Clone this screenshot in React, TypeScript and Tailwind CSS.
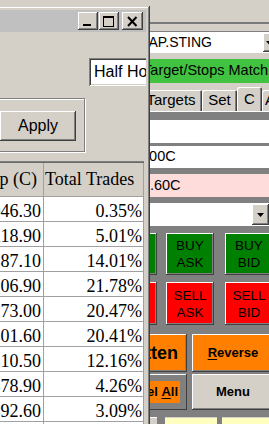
import React from 'react';

// classic 3D bevels
const raised =
  'shadow-[inset_-1px_-1px_0_#404040,inset_1px_1px_0_#ffffff,inset_-2px_-2px_0_#808080]';
const sunken =
  'shadow-[inset_1px_1px_0_#808080,inset_-1px_-1px_0_#ffffff,inset_2px_2px_0_#404040,inset_-2px_-2px_0_#d4d0c8]';
const frame =
  'shadow-[inset_-1px_-1px_0_#404040,inset_1px_1px_0_#d4d0c8,inset_-2px_-2px_0_#808080,inset_2px_2px_0_#ffffff]';

const stats = [
  ['1046.30', '0.35%'],
  ['1118.90', '5.01%'],
  ['1187.10', '14.01%'],
  ['1206.90', '21.78%'],
  ['1273.00', '20.47%'],
  ['1301.60', '20.41%'],
  ['1310.50', '12.16%'],
  ['1378.90', '4.26%'],
  ['1392.60', '3.09%'],
  ['1401.20', '0.44%'],
];

const DownArrow = () => (
  <svg width="7" height="4" viewBox="0 0 7 4">
    <path d="M0 0h7L3.5 4z" fill="#000" />
  </svg>
);

const Tab = ({ label, width, selected = false, left = false }: { label: string; width: string; selected?: boolean; left?: boolean }) => (
  <div
    className={`${width} ${selected ? 'h-[24px]' : 'h-[21px]'} ${left ? 'justify-start pl-[3px]' : 'justify-center'} shrink-0 flex items-center bg-[#d4d0c8] rounded-t-[2px] shadow-[inset_1px_1px_0_#ffffff,inset_-1px_0_0_#404040,inset_-2px_0_0_#808080]`}
  >
    {label}
  </div>
);

const TradePanel = () => (
  <div className="absolute left-[100px] top-0 w-[180px] h-[440px] flex flex-col bg-[#d4d0c8] text-[14px]">
    <div className="mt-[22px] h-[2px] bg-[#7a7a7a] shrink-0" />

    {/* symbol combo */}
    <div className="mt-[7px] h-[22px] shrink-0 flex bg-white border-t border-[#808080]">
      <div className="flex-1 flex items-center justify-end pr-[51px]">AP.STING</div>
      <div className={`w-[17px] my-[1px] bg-[#d4d0c8] flex items-center pl-[3px] ${raised}`}>
        <DownArrow />
      </div>
    </div>

    <div className="mt-[6px] h-[24px] shrink-0 bg-[#41c241] flex items-center justify-end pr-[12px] text-[14.5px]">
      Target/Stops Match
    </div>

    {/* tabs */}
    <div className="mt-[4px] h-[24px] shrink-0 flex items-end pl-[40px] text-[15px]">
      <Tab label="Targets" width="w-[62px]" />
      <Tab label="Set" width="w-[35px]" />
      <Tab label="C" width="w-[25px]" selected />
      <Tab label="Auto" width="w-[40px]" left />
    </div>
    <div className="h-px bg-white shrink-0" />

    <div className="flex-1 flex flex-col bg-[#808080]">
      <div className="mt-[8px] h-[23px] bg-white shrink-0" />
      <div className="mt-[3px] h-[22px] bg-white shrink-0 flex items-center pl-[37px] text-[14.5px]">1.00C</div>
      <div className="mt-[6px] h-[23px] bg-[#ffdcdc] shrink-0 flex items-center pl-[37px] text-[14.5px]">-0.60C</div>
      <div className="mt-[6px] h-[23px] bg-white shrink-0 flex mr-[11px]">
        <div className="flex-1" />
        <div className={`w-[17px] my-[1px] bg-[#d4d0c8] flex items-center justify-center ${raised}`}>
          <DownArrow />
        </div>
      </div>

      {/* order buttons */}
      <div className="mt-[7px] h-[42px] shrink-0 flex pl-[9px] text-[13.5px] leading-[17px] text-center">
        <div className={`w-[48px] bg-[#008000] ${raised}`} />
        <div className={`ml-[9px] w-[48px] bg-[#008000] flex items-center justify-center ${raised}`}>BUY<br />ASK</div>
        <div className={`ml-[11px] w-[48px] bg-[#008000] flex items-center justify-center ${raised}`}>BUY<br />BID</div>
      </div>
      <div className="mt-[7px] h-[43px] shrink-0 flex pl-[9px] text-[13.5px] leading-[17px] text-center">
        <div className={`w-[48px] bg-[#ff0000] ${raised}`} />
        <div className={`ml-[9px] w-[48px] bg-[#ff0000] flex items-center justify-center ${raised}`}>SELL<br />ASK</div>
        <div className={`ml-[11px] w-[48px] bg-[#ff0000] flex items-center justify-center ${raised}`}>SELL<br />BID</div>
      </div>

      <div className="mt-[9px] h-[38px] shrink-0 flex pl-[6px] font-bold">
        <div className={`w-[81px] bg-[#ff8000] flex items-center justify-end pr-[9px] text-[18px] whitespace-nowrap ${raised}`}>Flatten</div>
        <div className={`ml-[5px] w-[82px] bg-[#ff8000] flex items-center justify-center text-[13px] ${raised}`}>
          <span><span className="underline underline-offset-2">R</span>everse</span>
        </div>
      </div>
      <div className="mt-[2px] h-[36px] shrink-0 flex pl-[6px] font-bold text-[13px]">
        <div className={`w-[81px] bg-[#808080] flex items-center justify-end pr-[7px] ${raised}`}>
          <span className="bg-[#ff8000] h-[22px] px-[2px] flex items-center whitespace-nowrap">
            Cancel&nbsp;<span className="underline underline-offset-2">A</span>ll
          </span>
        </div>
        <div className={`ml-[5px] w-[82px] bg-[#d4d0c8] flex items-center justify-center ${raised}`}>Menu</div>
      </div>

      <div className="mt-[7px] h-[20px] shrink-0 flex pl-[9px]">
        <div className="w-[48px] bg-[#d4d0c8] border-t border-white" />
        <div className="ml-[8px] w-[52px] bg-[#ffffc0] border-t border-[#d4d0c8]" />
        <div className="ml-[5px] w-[58px] bg-[#ffffc0] border-t border-[#d4d0c8]" />
      </div>
    </div>
  </div>
);

const StatsWindow = () => (
  <div className={`absolute left-[-100px] top-[6px] w-[250px] h-[440px] bg-[#d4d0c8] p-[4px] flex flex-col ${frame}`}>
    {/* caption */}
    <div className="h-[22px] shrink-0 bg-[#c0c0c0] flex items-center justify-end pr-[3px]">
      <div className={`w-[20px] h-[18px] bg-[#d4d0c8] ${raised}`}>
        <svg width="20" height="18" viewBox="0 0 20 18">
          <rect x="5" y="12" width="8" height="2" fill="#000" />
        </svg>
      </div>
      <div className={`ml-[1px] w-[20px] h-[18px] bg-[#d4d0c8] ${raised}`}>
        <svg width="20" height="18" viewBox="0 0 20 18" fill="#000">
          <rect x="4" y="4" width="11" height="2" />
          <rect x="4" y="4" width="1" height="11" />
          <rect x="14" y="4" width="1" height="11" />
          <rect x="4" y="14" width="11" height="1" />
        </svg>
      </div>
      <div className={`ml-[3px] w-[21px] h-[18px] bg-[#d4d0c8] ${raised}`}>
        <svg width="21" height="18" viewBox="0 0 21 18">
          <path d="M6 5l8.5 9M14.5 5L6 14" stroke="#000" strokeWidth="2" />
        </svg>
      </div>
    </div>

    <div className="flex-1 flex flex-col overflow-hidden">
      <div className={`mt-[26px] ml-[185px] w-[120px] h-[28px] shrink-0 bg-white flex items-center pl-[5px] text-[16px] whitespace-nowrap ${sunken}`}>
        Half Hour
      </div>

      <div className="mt-[12px] ml-[56px] w-[125px] h-[54px] shrink-0 border border-[#808080] shadow-[inset_1px_1px_0_#ffffff,1px_1px_0_#ffffff] pt-[12px] pl-[39px]">
        <div className={`w-[76px] h-[30px] flex items-center justify-center text-[16px] ${raised}`}>Apply</div>
      </div>

      {/* distribution table */}
      <div className="mt-[9px] w-[240px] shrink-0 font-['Liberation_Serif','Times_New_Roman',serif] text-[18px]">
        <div className="h-px bg-[#808080]" />
        <div className="h-px bg-[#696969]" />
        <div className="grid grid-cols-[140px_100px]">
          <div className="h-[34px] leading-[33px] text-right pr-[6px] bg-[#d4d0c8] border-r border-b border-[#a0a0a0] whitespace-nowrap">
            Step (C)
          </div>
          <div className="h-[34px] leading-[33px] pl-[1px] bg-[#d4d0c8] border-r border-b border-[#a0a0a0] whitespace-nowrap">
            Total Trades
          </div>
          {stats.map(([price, pct]) => (
            <React.Fragment key={price}>
              <div className="h-[25px] leading-[20px] pt-[4px] text-right pr-[2px] bg-white border-r border-b border-[#a0a0a0]">
                {price}
              </div>
              <div className="h-[25px] leading-[20px] pt-[4px] text-right pr-[1px] bg-white border-r border-b border-[#a0a0a0]">
                {pct}
              </div>
            </React.Fragment>
          ))}
        </div>
      </div>
    </div>
  </div>
);

export default function App() {
  return (
    <div className="relative w-[269px] h-[424px] overflow-hidden bg-[#d4d0c8] text-black font-['Liberation_Sans',Arial,sans-serif]">
      <TradePanel />
      <StatsWindow />
    </div>
  );
}
